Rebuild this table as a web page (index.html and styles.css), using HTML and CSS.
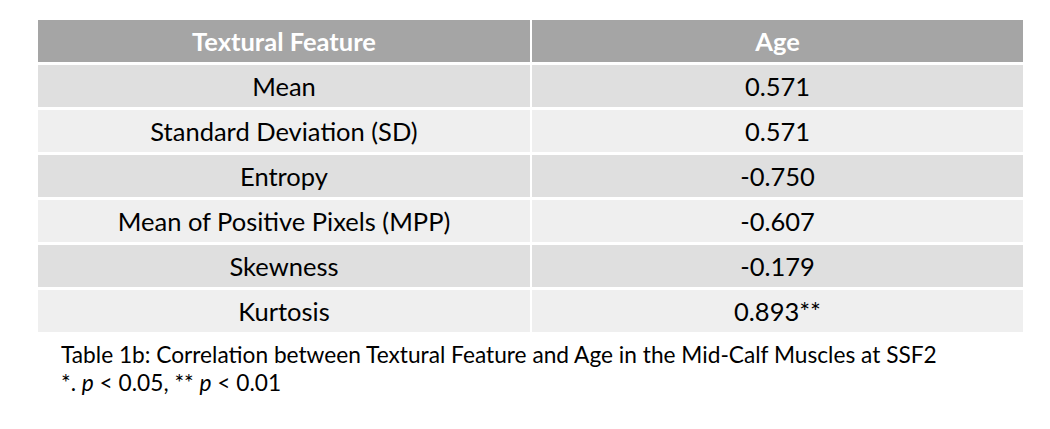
FILE: index.html
```html
<!DOCTYPE html>
<html>
<head>
<meta charset="utf-8">
<link rel="stylesheet" href="styles.css">
</head>
<body>
<div class="page">
  <div class="table">
    <div class="cell head">Textural Feature</div>
    <div class="cell head">Age</div>
    <div class="cell odd">Mean</div>
    <div class="cell odd">0.571</div>
    <div class="cell even">Standard Deviation (SD)</div>
    <div class="cell even">0.571</div>
    <div class="cell odd">Entropy</div>
    <div class="cell odd">-0.750</div>
    <div class="cell even">Mean of Positive Pixels (MPP)</div>
    <div class="cell even">-0.607</div>
    <div class="cell odd">Skewness</div>
    <div class="cell odd">-0.179</div>
    <div class="cell even last">Kurtosis</div>
    <div class="cell even last">0.893**</div>
  </div>
  <div class="caption">
    <div class="line">Table 1b: Correlation between Textural Feature and Age in the Mid-Calf Muscles at SSF2</div>
    <div class="line">*. <i>p</i> &lt; 0.05, ** <i>p</i> &lt; 0.01</div>
  </div>
</div>
</body>
</html>
```

FILE: styles.css
```css
html, body {
  margin: 0;
  padding: 0;
  background: #ffffff;
}

.page {
  width: 1050px;
  height: 429px;
  padding: 20px 0 0 38px;
  box-sizing: border-box;
  font-family: "Lato", "Liberation Sans", sans-serif;
  color: #000000;
}

.table {
  display: grid;
  grid-template-columns: 492px 491px;
  grid-auto-rows: 42px;
  column-gap: 2px;
  row-gap: 3px;
  width: 985px;
}

.cell {
  display: flex;
  align-items: center;
  justify-content: center;
  font-size: 25.5px;
}

.head {
  background: #a5a5a5;
  color: #ffffff;
  font-weight: 700;
}

.odd {
  background: #dfdfdf;
}

.even {
  background: #efefef;
}

.caption {
  margin-top: 9px;
  padding-left: 23px;
  font-size: 22.7px;
  line-height: 28px;
}
```
